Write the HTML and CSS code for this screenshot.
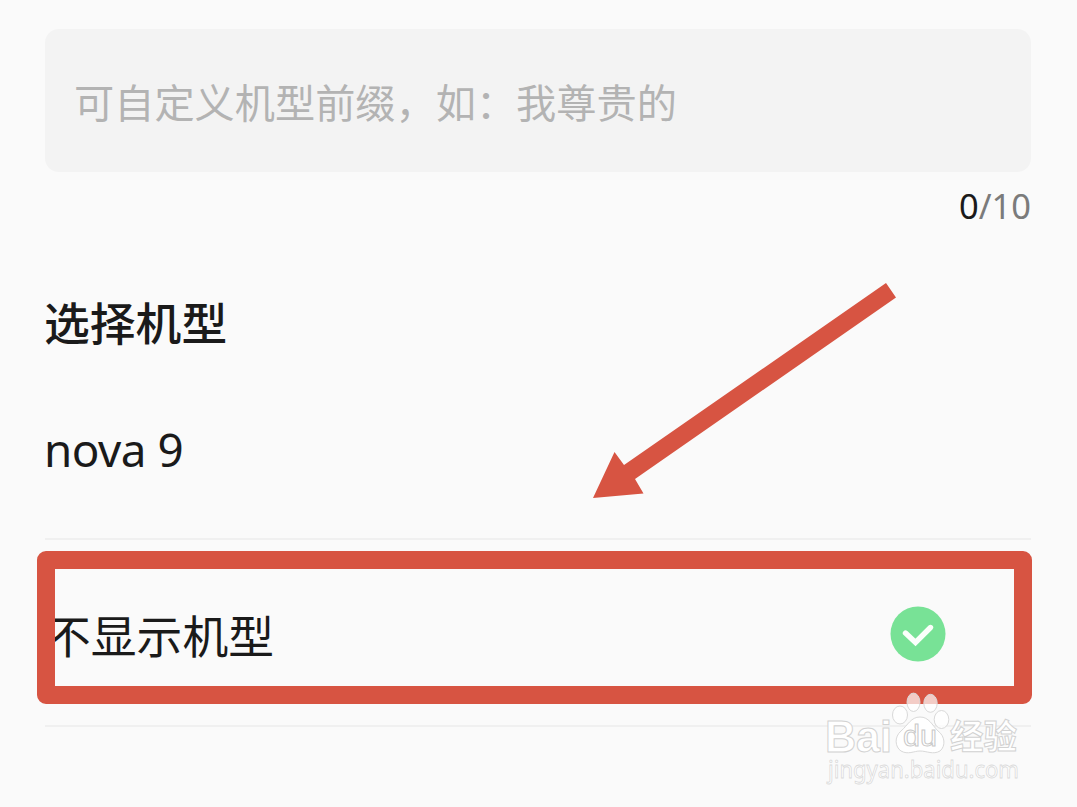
FILE: index.html
```html
<!DOCTYPE html>
<html lang="zh-CN">
<head>
<meta charset="utf-8">
<title>选择机型</title>
<link rel="stylesheet" href="styles.css">
</head>
<body>
<main class="page">
  <div class="prefix-field">可自定义机型前缀，如：我尊贵的</div>
  <div class="counter"><span class="counter-now">0</span>/10</div>
  <h1 class="title">选择机型</h1>
  <div class="row row-first"><span class="latin">nova 9</span></div>
  <div class="row row-second">
    <span>不显示机型</span>
    <svg class="check" viewBox="0 0 56 56"><circle cx="28" cy="28" r="27.5" fill="#78e296"/><path d="M15.5 27 L25.5 36.5 L40.5 21.5" fill="none" stroke="#fbfffb" stroke-width="5.4" stroke-linecap="round"/></svg>
  </div>
</main>
<div class="highlight"></div>
<svg class="arrow" viewBox="0 0 304 216"><path d="M293 0 L303 14.5 L42 196 L50.5 210.5 L0 215 L21.5 169 L31 182 Z" fill="#d75442"/></svg>
<svg class="watermark" viewBox="820 685 210 105">
  <g fill="#fff" stroke="#d9d9d9" stroke-width="1">
    <g class="wm-toes">
      <ellipse cx="900" cy="715" rx="7.5" ry="9"/>
      <ellipse cx="913.5" cy="702.3" rx="6.5" ry="9.2"/>
      <ellipse cx="930.5" cy="703.3" rx="6.7" ry="9"/>
      <ellipse cx="941.5" cy="719.5" rx="7.3" ry="9"/>
    </g>
    <path d="M920 717 C911 717 908 725 901 731 C894 737 895 747 901 751 C908 755 914 751 920 751 C927 751 933 755 940 751 C946 746 945 736 938 731 C932 725 929 717 920 717 Z"/>
    <text class="wm-logo" x="825" y="751.5" textLength="67" lengthAdjust="spacingAndGlyphs">Bai</text>
    <text class="wm-du" x="903" y="746" textLength="34" lengthAdjust="spacingAndGlyphs">du</text>
    <text class="wm-cn" x="950" y="748.5" textLength="67" lengthAdjust="spacingAndGlyphs">经验</text>
    <text class="wm-url" x="828" y="777.5" textLength="191" lengthAdjust="spacingAndGlyphs">jingyan.baidu.com</text>
  </g>
</svg>
</body>
</html>
```
FILE: styles.css
```css
* { box-sizing: border-box; }
body {
  margin: 0;
  width: 1077px;
  height: 807px;
  overflow: hidden;
  position: relative;
  background: #fafafa;
  color: #1a1a1a;
  font-family: "Noto Sans CJK SC", sans-serif;
}
.page {
  display: flex;
  flex-direction: column;
  padding: 29px 46px 0 45px;
}
.prefix-field {
  height: 143px;
  padding: 43px 29px 0;
  border-radius: 14px;
  background: #f3f3f3;
  color: #b3b3b3;
  font-size: 40.2px;
  line-height: 58px;
  white-space: nowrap;
}
.counter {
  margin-top: 10px;
  text-align: right;
  font-family: "Noto Sans", sans-serif;
  font-size: 34.5px;
  line-height: 48px;
  color: #7b7b7b;
}
.counter-now { color: #1a1a1a; }
.title {
  margin: 58px 0 0 -1px;
  font-size: 45.8px;
  line-height: 66px;
  font-weight: 500;
}
.row {
  display: flex;
  align-items: center;
  justify-content: space-between;
  font-size: 45.8px;
  line-height: 66px;
  border-bottom: 2px solid #f0f0f0;
}
.row-first { height: 186px; padding-top: 5px; }
.row-second { height: 187px; padding: 3px 85px 0 0; }
.latin {
  margin-left: -1px;
  font-family: "Noto Sans", sans-serif;
  font-size: 45.8px;
  letter-spacing: -.5px;
}
.check { width: 56px; height: 56px; }
.highlight {
  position: absolute;
  left: 37px;
  top: 551px;
  width: 995px;
  height: 153px;
  border: 18px solid #d75442;
  border-radius: 9px;
}
.arrow {
  position: absolute;
  left: 593px;
  top: 283px;
  width: 304px;
  height: 216px;
}
.watermark {
  position: absolute;
  left: 820px;
  top: 685px;
  width: 210px;
  height: 105px;
}
.wm-toes { fill-opacity: .7; }
.wm-logo { font: bold 45px "Liberation Sans", sans-serif; stroke: #d2d2d2; }
.wm-du { font: 30px "Liberation Sans", sans-serif; stroke: #c8c8c8; }
.wm-cn { font: bold 34px "Noto Sans CJK SC", sans-serif; stroke: #d2d2d2; }
.wm-url { font: 24px "Noto Sans", sans-serif; stroke-width: .8; stroke: #dadada; }
```
